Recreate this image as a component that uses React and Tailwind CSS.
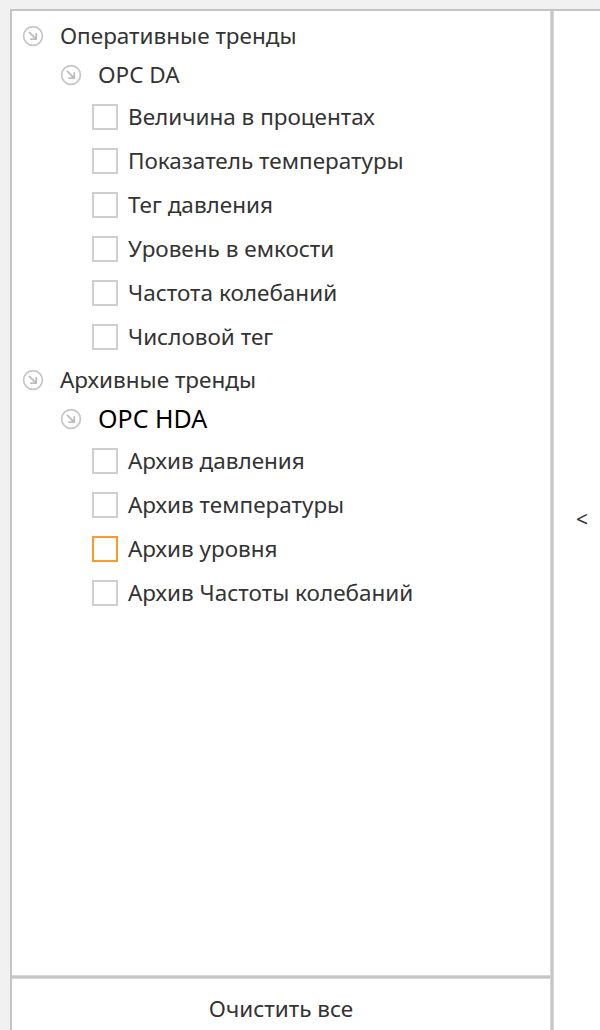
import React from 'react';

const groups = [
  {
    title: 'Оперативные тренды',
    source: 'OPC DA',
    tags: [
      'Величина в процентах',
      'Показатель температуры',
      'Тег давления',
      'Уровень в емкости',
      'Частота колебаний',
      'Числовой тег',
    ],
  },
  {
    title: 'Архивные тренды',
    source: 'OPC HDA',
    active: true,
    tags: ['Архив давления', 'Архив температуры', 'Архив уровня', 'Архив Частоты колебаний'],
  },
];

const hovered = 'Архив уровня';

function ExpandIcon() {
  return (
    <svg width="22" height="22" viewBox="0 0 22 22" fill="none" className="shrink-0">
      <circle cx="11" cy="11" r="9.4" stroke="#c6c6c6" strokeWidth="1.7" />
      <path d="M7.4 7.4 L14.2 14.2 M14.2 9 V14.2 H9" stroke="#bdbdbd" strokeWidth="1.8" strokeLinecap="round" strokeLinejoin="round" />
    </svg>
  );
}

function TagRow({ label }) {
  const isHover = label === hovered;
  return (
    <div className="h-[44px] flex items-center pl-[80px]">
      <span
        className={`w-[26px] h-[26px] border-2 bg-white shrink-0 ${isHover ? 'border-[#ff9a2e]' : 'border-[#cfcfcf]'}`}
      />
      <span className="ml-[10px] text-[22.5px] text-[#333333]">{label}</span>
    </div>
  );
}

function Group({ group, first }) {
  return (
    <div className={first ? '' : 'mt-[2px]'}>
      <div className="h-[38px] flex items-center pl-[10px] gap-[16px]">
        <ExpandIcon />
        <span className="text-[22.5px] text-[#333333]">{group.title}</span>
      </div>
      <div className="h-[40px] flex items-center pl-[48px] gap-[16px]">
        <ExpandIcon />
        <span className={group.active ? 'text-[25px] text-black' : 'text-[22.5px] text-[#333333]'}>
          {group.source}
        </span>
      </div>
      {group.tags.map((t) => (
        <TagRow key={t} label={t} />
      ))}
    </div>
  );
}

export default function App() {
  return (
    <div
      className="w-[600px] h-[1030px] overflow-hidden bg-[#f1f1f1] pt-[9px] pl-[10px] flex"
      style={{ fontFamily: '"Noto Sans", "Open Sans", sans-serif' }}
    >
      <div className="flex-1 flex border-t-2 border-[#c4c4c4] bg-white">
        <div className="w-[540px] border-l-2 border-[#c4c4c4] flex flex-col">
          <div className="flex-1 pt-[6px]">
            {groups.map((g, i) => (
              <Group key={g.title} group={g} first={i === 0} />
            ))}
          </div>
          <div className="h-[4px] bg-[#c6c6c6] border-y border-[#d8d8d8]" />
          <div className="h-[51px] flex justify-center pt-[14px]">
            <span className="text-[22.5px] leading-[32px] text-[#333333]">Очистить все</span>
          </div>
        </div>
        <div className="w-[4px] bg-[#c6c6c6] border-x border-[#d8d8d8]" />
        <div className="flex-1 flex items-center justify-center pl-[10px] pb-[2px]">
          <span className="text-[21px] text-[#333333]">&lt;</span>
        </div>
      </div>
    </div>
  );
}
